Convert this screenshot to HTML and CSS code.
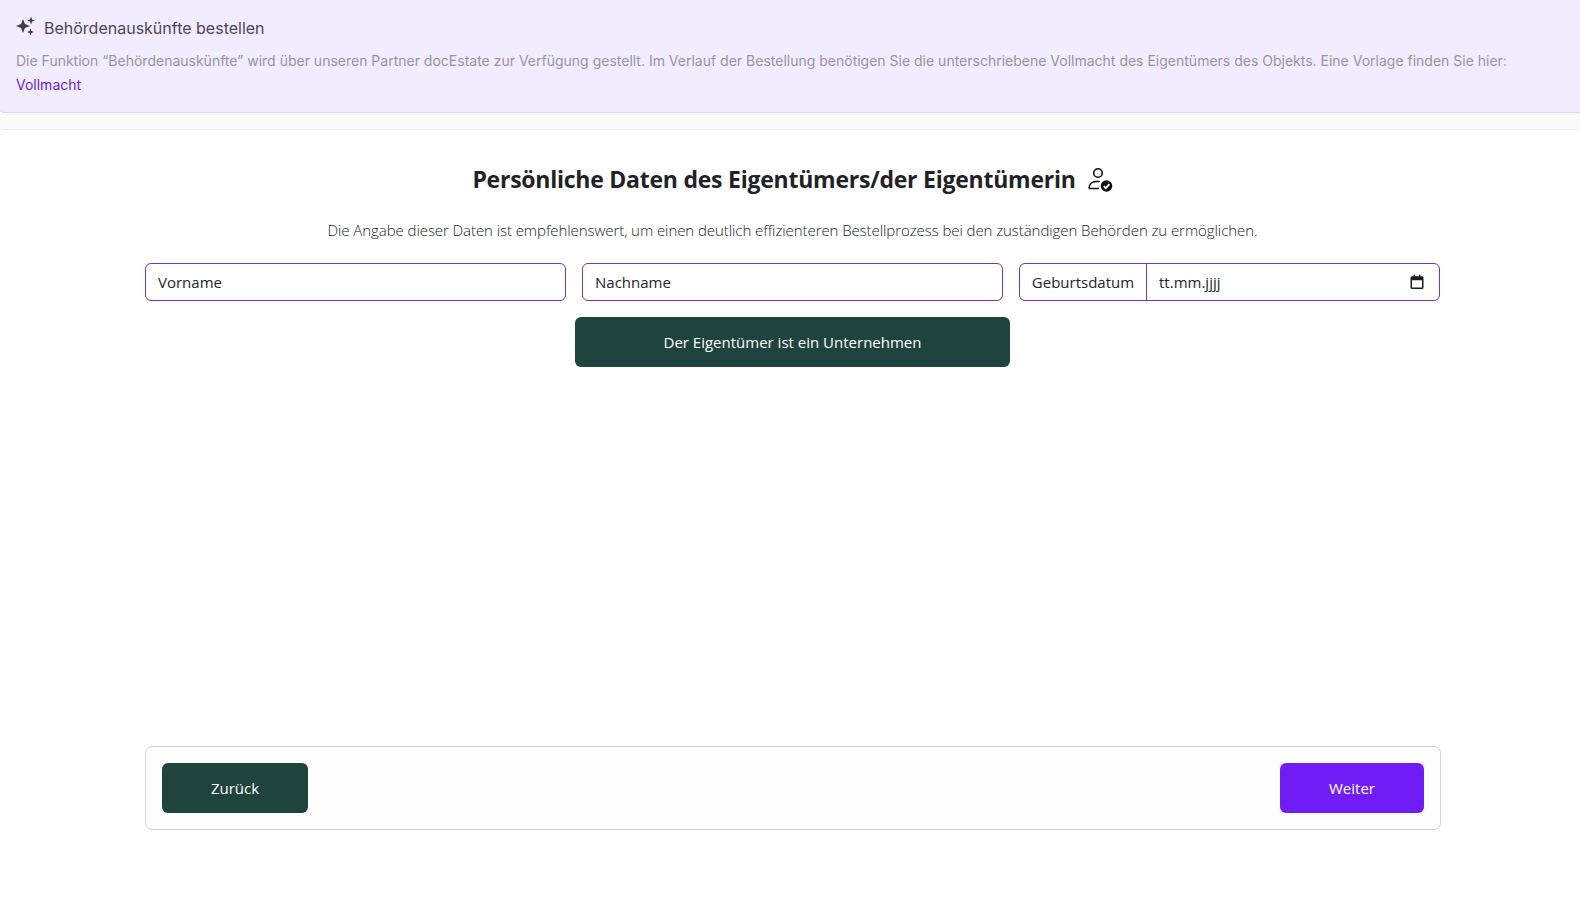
FILE: index.html
```html
<!DOCTYPE html>
<html lang="de">
<head>
<meta charset="utf-8">
<title>Behördenauskünfte bestellen</title>
<link rel="stylesheet" href="styles.css">
</head>
<body>
<section class="banner">
  <div class="banner-title">
    <svg class="sparkle" viewBox="0 0 20 20" width="20" height="20" aria-hidden="true"><path d="M7 3l1.900 5.100L14 10l-5.100 1.900L7 17l-1.900-5.100L0 10l5.100-1.900z"/><path d="M15 .6l1.100 2.800 2.800 1.100-2.800 1.100L15 8.400l-1.100-2.800-2.800-1.100 2.800-1.100z"/><path d="M14.500 12.500l.95 2.550L18 16l-2.550.95-.95 2.550-.95-2.550L11 16l2.550-.95z"/></svg>
    <span>Behördenauskünfte bestellen</span>
  </div>
  <p class="banner-text">Die Funktion “Behördenauskünfte” wird über unseren Partner docEstate zur Verfügung gestellt. Im Verlauf der Bestellung benötigen Sie die unterschriebene Vollmacht des Eigentümers des Objekts. Eine Vorlage finden Sie hier: <a href="#">Vollmacht</a></p>
</section>
<main class="card">
  <h1 class="heading">
    <span>Persönliche Daten des Eigentümers/der Eigentümerin</span>
    <svg class="user-icon" viewBox="0 0 26 26" width="26" height="26" aria-hidden="true">
      <circle class="stroke" cx="11" cy="7" r="4.300"/>
      <path class="stroke" d="M2 22.500c0-4.600 3.200-7 7.500-7h3.500M2 22.500h10"/>
      <circle cx="19.500" cy="20" r="5.800"/>
      <path class="check" d="M16.800 20.200l2 2 3.600-4"/>
    </svg>
  </h1>
  <p class="lead">Die Angabe dieser Daten ist empfehlenswert, um einen deutlich effizienteren Bestellprozess bei den zuständigen Behörden zu ermöglichen.</p>
  <div class="fields">
    <input class="field" type="text" placeholder="Vorname">
    <input class="field" type="text" placeholder="Nachname">
    <div class="date-group">
      <span class="date-label">Geburtsdatum</span>
      <div class="date-value">
        <span>tt.mm.jjjj</span>
        <svg viewBox="0 0 16 16" width="16" height="16" aria-hidden="true"><path d="M3 2.200h1.600V.8h1.500v1.400h3.800V.8h1.500v1.400H13a1.500 1.500 0 0 1 1.500 1.500v9.800A1.500 1.500 0 0 1 13 15H3a1.500 1.500 0 0 1-1.500-1.500V3.700A1.500 1.500 0 0 1 3 2.200zm0 4v7.300h10V6.200z"/></svg>
      </div>
    </div>
  </div>
  <div class="company-row">
    <button class="btn btn-green btn-company" type="button">Der Eigentümer ist ein Unternehmen</button>
  </div>
  <footer class="actions">
    <button class="btn btn-green btn-back" type="button">Zurück</button>
    <button class="btn btn-purple btn-next" type="button">Weiter</button>
  </footer>
</main>
</body>
</html>
```
FILE: styles.css
```css
* { box-sizing: border-box; }
html, body { height: 100%; }
body {
  margin: 0;
  background: #fafaf9;
  font-family: "Open Sans", "Noto Sans", sans-serif;
  color: #212529;
  overflow: hidden;
}
.banner {
  height: 113px;
  padding: 15px 16px 0;
  background: #f1edff;
  border-bottom: 1px solid #d9d5ea;
  border-radius: 0 0 0 4px;
  font-family: Inter, sans-serif;
}
.banner-title {
  display: flex;
  align-items: center;
  gap: 8px;
  height: 26px;
  font-size: 16px;
  color: #4a4658;
}
.sparkle { fill: #3f3b50; margin-top: -4px; }
.banner-text {
  margin: 8px 0 0;
  font-size: 14px;
  line-height: 24px;
  color: #98949f;
}
.banner-text a { color: #6a1fd0; text-decoration: none; }
.card {
  margin-top: 16px;
  height: 777px;
  padding: 29px 0 0 5px;
  background: #fff;
  border-top: 1px solid #ececec;
  border-radius: 4px 0 0 0;
  display: flex;
  flex-direction: column;
  align-items: center;
}
.heading {
  margin: 0;
  height: 40px;
  display: flex;
  align-items: center;
  gap: 11px;
  font-size: 23px;
  font-weight: 700;
  letter-spacing: -0.24px;
  color: #1f2226;
}
.user-icon { fill: #111; }
.user-icon .stroke { fill: none; stroke: #111; stroke-width: 1.6; }
.user-icon .check { fill: none; stroke: #fff; stroke-width: 1.8; }
.lead {
  margin: 19px 0 0;
  font-size: 15px;
  font-weight: 300;
  line-height: 24px;
  letter-spacing: -0.07px;
  color: #212529;
}
.fields {
  margin-top: 21px;
  width: 1295px;
  display: grid;
  grid-template-columns: repeat(3, 1fr);
  gap: 16px;
}
.field, .date-group {
  height: 38px;
  border: 1px solid #6f35b5;
  border-radius: 6px;
  background: #fff;
  font-family: inherit;
  font-size: 15px;
  color: #212529;
}
.field { width: 100%; padding: 0 12px; outline: none; }
.field::placeholder { color: #212529; opacity: 1; }
.date-group { display: flex; align-items: stretch; }
.date-label {
  width: 127px;
  display: flex;
  align-items: center;
  justify-content: center;
  border-right: 1px solid #6f35b5;
}
.date-value {
  flex: 1;
  display: flex;
  align-items: center;
  justify-content: space-between;
  padding: 0 14px 0 12px;
}
.date-value svg { fill: #1c1c1c; }
.company-row { margin-top: 16px; }
.btn {
  height: 50px;
  border: 0;
  border-radius: 6px;
  color: #fff;
  font-family: inherit;
  font-size: 15px;
  display: block;
}
.btn-green { background: #1f443d; }
.btn-purple { background: #6f1cf5; }
.btn-company { width: 435px; }
.actions {
  margin-top: 379px;
  margin-left: 1px;
  width: 1296px;
  height: 84px;
  padding: 16px;
  display: flex;
  justify-content: space-between;
  background: #fdfdfd;
  border: 1px solid #d4d4d4;
  border-radius: 7px;
}
.btn-back { width: 146px; }
.btn-next { width: 144px; }
```
